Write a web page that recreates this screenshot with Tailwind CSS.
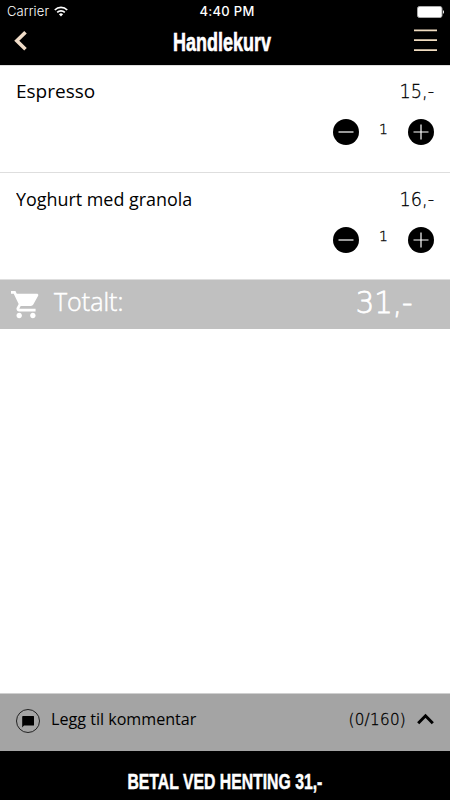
<!DOCTYPE html>
<html lang="no">
<head>
  <meta charset="UTF-8">
  <meta name="viewport" content="width=device-width, initial-scale=1.0">
  <title>Handlekurv</title>
  <script src="https://cdn.jsdelivr.net/npm/@tailwindcss/browser@4"></script>
</head>
<body class="bg-white text-black font-['Open_Sans',sans-serif]">
  <div class="w-[450px] h-[800px] flex flex-col overflow-hidden">
    <header class="h-[65px] shrink-0 bg-black text-white">
      <!-- Status bar -->
      <div class="h-[23px] grid grid-cols-3 items-center pl-[7px] pr-[5px] font-[Inter,sans-serif] text-[13px] leading-none">
        <div class="flex items-center gap-[5px]">
          <span class="font-light tracking-[.1px]">Carrier</span>
          <svg class="w-[14px] h-[11px]" viewBox="0 0 14 11" fill="none" stroke="white" stroke-width="1.7">
            <path d="M.8 4a8.8 8.8 0 0 1 12.4 0M3.2 6.4a5.4 5.4 0 0 1 7.6 0"/>
            <path d="M7 10.5 4.9 8.3a3 3 0 0 1 4.2 0z" fill="white" stroke="none"/>
          </svg>
        </div>
        <span class="text-center font-medium tracking-[.3px] whitespace-nowrap pl-[2px]">4:40 PM</span>
        <svg class="w-[28px] h-[12px] justify-self-end" viewBox="0 0 28 12">
          <rect x=".5" y=".5" width="24.5" height="11" rx="2" fill="white" stroke="#aaa"/>
          <path d="M26 4q2 2 0 4z" fill="white"/>
        </svg>
      </div>
      <!-- Title bar -->
      <div class="h-[42px] flex justify-between pl-[14px] pr-[13px]">
        <svg class="w-[14px] h-[20px] mt-[8px]" viewBox="0 0 14 20" fill="none" stroke="#f0dcc8" stroke-width="3.6">
          <path d="M11.5 1.3 2.8 9.8l8.7 8.5"/>
        </svg>
        <h1 class="w-[140px] pl-[3px] flex justify-center text-[25px] leading-[38px] font-bold font-['Liberation_Sans',sans-serif] [-webkit-text-stroke:.6px_white]"><span class="scale-x-[.72]">Handlekurv</span></h1>
        <svg class="w-[23px] h-[24px] mt-[5px]" viewBox="0 0 23 24" fill="none" stroke="#f0dcc0" stroke-width="1.7">
          <path d="M0 2.3h23M0 12.2h23M0 22.2h23"/>
        </svg>
      </div>
    </header>

    <!-- Cart lines -->
    <section class="h-[108px] shrink-0 border-t border-b border-[#dedede] pl-4 pr-4">
      <div class="flex justify-between h-[52px] pt-[10px] text-[19px] leading-[30px]">
        <span>Espresso</span>
        <span class="font-['DejaVu_Sans',sans-serif] font-light origin-right scale-x-[.93] [-webkit-text-stroke:.3px_black]">15,-</span>
      </div>
      <div class="flex justify-end gap-[19px]">
        <svg class="w-[26px] h-[26px] mt-px" viewBox="0 0 26 26"><circle cx="13" cy="13" r="13"/><path d="M5.5 13h15" stroke="white" stroke-width="1.2"/></svg>
        <span class="w-[11px] text-center text-[14px] leading-[22px] font-light font-['DejaVu_Sans',sans-serif] [-webkit-text-stroke:.3px_black]">1</span>
        <svg class="w-[26px] h-[26px] mt-px" viewBox="0 0 26 26"><circle cx="13" cy="13" r="13"/><path d="M5.5 13h15M13 5.5v15" stroke="white" stroke-width="1.2"/></svg>
      </div>
    </section>
    <section class="h-[107px] shrink-0 border-b border-[#dedede] pl-4 pr-4">
      <div class="flex justify-between h-[52px] pt-[11px] text-[19px] leading-[30px]">
        <span class="origin-left scale-x-[.942]">Yoghurt med granola</span>
        <span class="font-['DejaVu_Sans',sans-serif] font-light origin-right scale-x-[.93] [-webkit-text-stroke:.3px_black]">16,-</span>
      </div>
      <div class="flex justify-end gap-[19px]">
        <svg class="w-[26px] h-[26px] mt-[2px]" viewBox="0 0 26 26"><circle cx="13" cy="13" r="13"/><path d="M5.5 13h15" stroke="white" stroke-width="1.2"/></svg>
        <span class="w-[11px] text-center text-[14px] leading-[22px] font-light font-['DejaVu_Sans',sans-serif] [-webkit-text-stroke:.3px_black]">1</span>
        <svg class="w-[26px] h-[26px] mt-[2px]" viewBox="0 0 26 26"><circle cx="13" cy="13" r="13"/><path d="M5.5 13h15M13 5.5v15" stroke="white" stroke-width="1.2"/></svg>
      </div>
    </section>

    <!-- Total -->
    <section class="h-[49px] shrink-0 bg-[#c0c0c0] text-white flex pl-[11px] pr-[37px]">
      <svg class="w-[28px] h-[28px] mt-[11px]" viewBox="1 2 20.5 20.5" fill="white">
        <path d="M7 18c-1.1 0-1.99.9-1.99 2S5.900 22 7 22s2-.9 2-2-.9-2-2-2zM1 2v2h2l3.600 7.590-1.350 2.450c-.16.280-.25.610-.25.960 0 1.100.9 2 2 2h12v-2H7.420c-.14 0-.25-.110-.25-.250l.03-.120.9-1.630h7.450c.75 0 1.410-.410 1.750-1.030l3.580-6.490c.08-.140.120-.310.120-.480 0-.550-.450-1-1-1H5.210l-.940-2H1zm16 16c-1.100 0-1.990.9-1.990 2s.890 2 1.990 2 2-.9 2-2-.9-2-2-2z"/>
      </svg>
      <span class="ml-[15px] text-[25px] leading-[43px] font-light [-webkit-text-stroke:.5px_white]">Totalt:</span>
      <span class="ml-auto font-['DejaVu_Sans',sans-serif] font-light text-[30px] leading-[45px] origin-right scale-x-[.97] [-webkit-text-stroke:.8px_white]">31,-</span>
    </section>

    <div class="grow"></div>

    <!-- Comment -->
    <section class="h-[58px] shrink-0 bg-[#a4a4a4] border-t border-[#cfcfcf] flex pl-4 pr-4 text-[16px] leading-[51px]">
      <svg class="w-[24px] h-[24px] mt-[15px]" viewBox="0 0 24 24">
        <circle cx="12" cy="12" r="11.500" fill="none" stroke="black" stroke-width=".8"/>
        <path d="M7 7h10.500q.5 0 .5.500v8.500q0 .5-.5.500H8L6.200 18.500V7.800q0-.8.800-.8z"/>
      </svg>
      <span class="ml-[11px] origin-left scale-x-[1.007]">Legg til kommentar</span>
      <span class="ml-auto pt-px font-['DejaVu_Sans',sans-serif] font-light text-[15px] tracking-[.3px] origin-right scale-x-[1.01] [-webkit-text-stroke:.3px_black]">(0/160)</span>
      <svg class="w-[17px] h-[12px] ml-[11px] mt-[19px]" viewBox="0 0 17 12" fill="none" stroke="black" stroke-width="3">
        <path d="M1.200 10.200 8.500 2.800l7.300 7.400"/>
      </svg>
    </section>

    <button class="h-[49px] shrink-0 bg-black text-white flex justify-center text-[22px] leading-[61px] font-bold font-['Liberation_Sans',sans-serif] whitespace-nowrap [-webkit-text-stroke:.5px_white]"><span class="scale-x-[.717]">BETAL VED HENTING 31,-</span></button>
  </div>
</body>
</html>
